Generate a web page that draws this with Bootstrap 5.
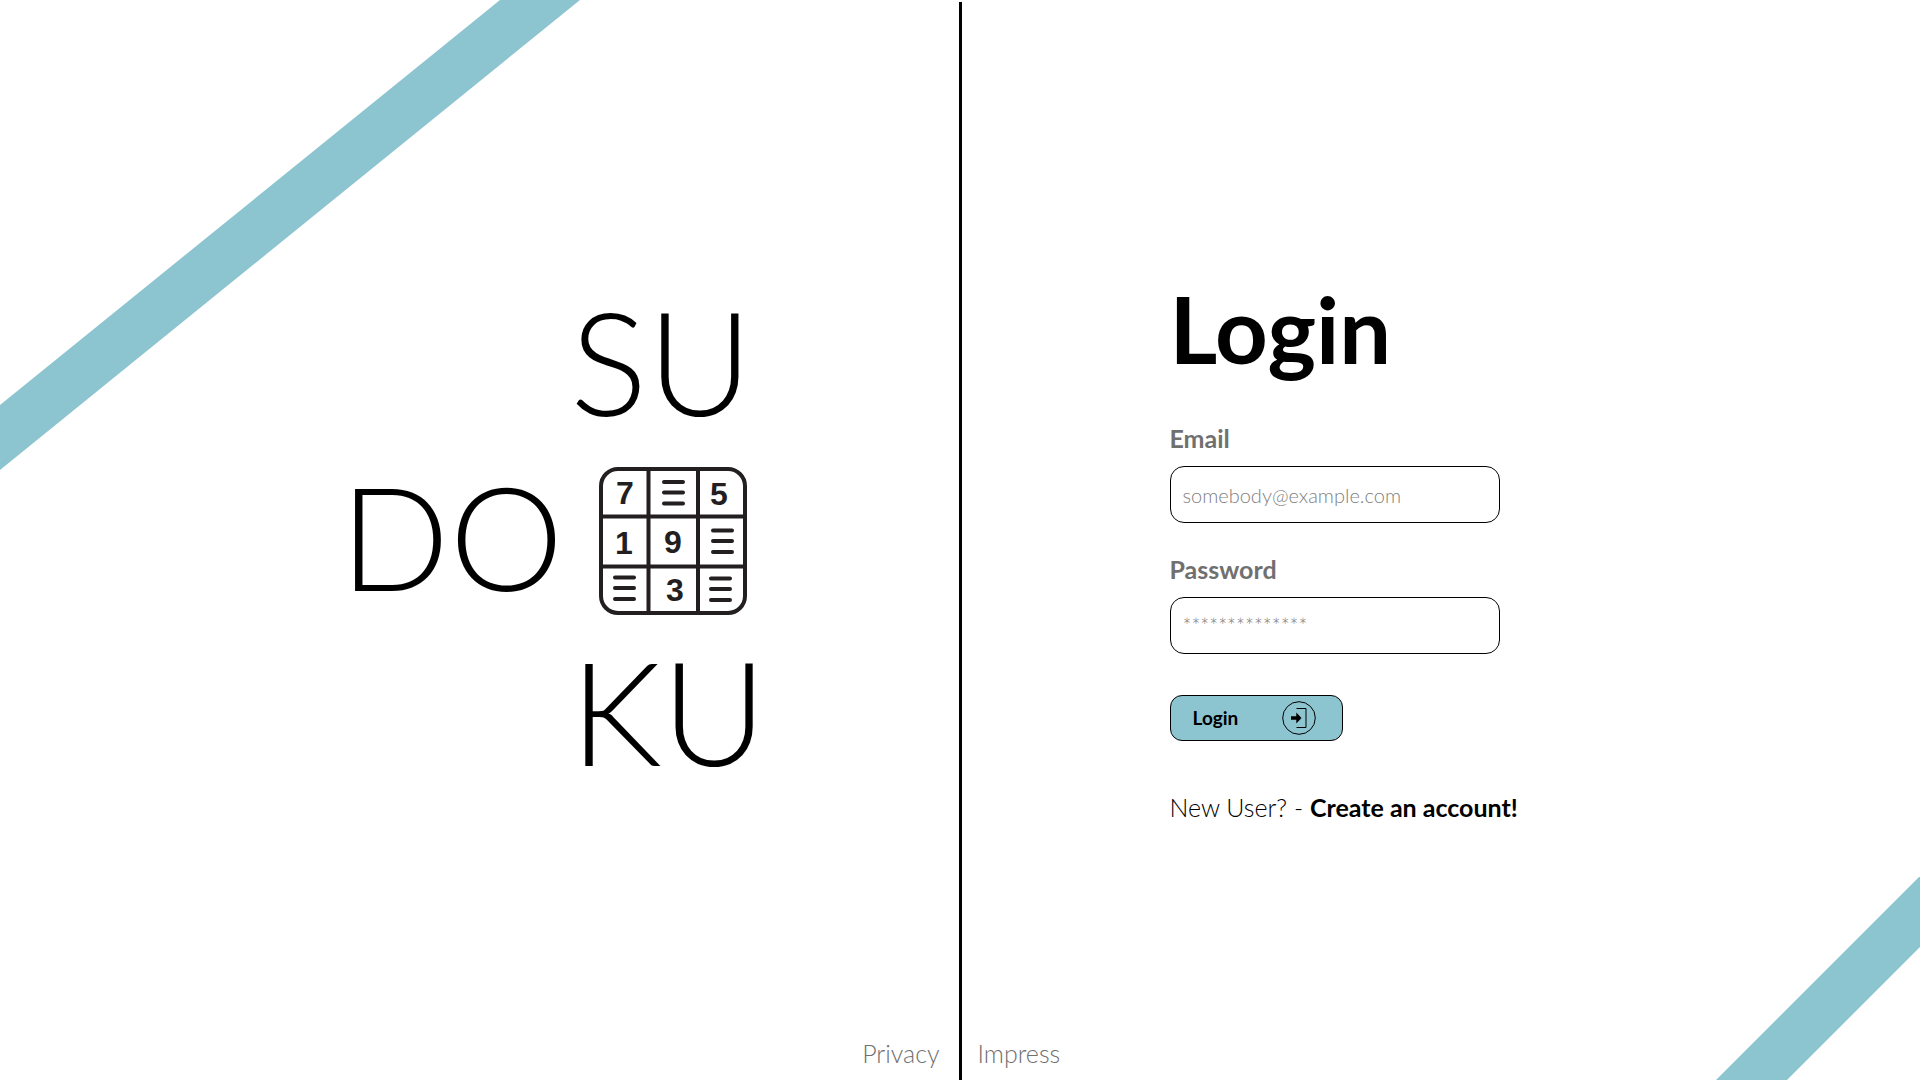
<!DOCTYPE html>
<html lang="en">
<head>
<meta charset="utf-8">
<meta name="viewport" content="width=device-width, initial-scale=1">
<title>Sudoku – Login</title>
<link href="https://cdn.jsdelivr.net/npm/bootstrap@5.3.0/dist/css/bootstrap.min.css" rel="stylesheet">
<style>
  :root { --accent: #8cc4d0; }
  body { font-family: Lato, "Open Sans", sans-serif; font-size: 25px; line-height: 29px; font-weight: 300; color: #000; background: #fff; }
  .divider { width: 3px; margin-top: 2px; background: #000; }
  .half { flex: 1 1 0; min-width: 0; }
  .ribbon { position: absolute; fill: var(--accent); pointer-events: none; }
  .ribbon-start { top: 0; left: 0; }
  .ribbon-end { right: 0; bottom: 0; }
  .brand { display: grid; grid-template-columns: auto auto; column-gap: 7px; margin: 0 192px 10px auto; font-size: 144px; line-height: 175px; font-weight: 300; }
  .brand-top, .brand-bottom { grid-column: 2; }
  .brand-grid { margin: 12px 0 0 29px; }
  .brand-digit { font: bold 32px "Liberation Sans", sans-serif; text-anchor: middle; fill: #231f20; }
  .login-form { width: 360px; margin: 18px 0 0 208px; }
  .login-title { font-size: 92px; line-height: 106px; font-weight: 700; margin-bottom: 42px; }
  .field-label { font-weight: 700; color: #707070; margin-bottom: 13px; }
  .field { width: 330px; height: 57px; border: 1px solid #000; border-radius: 14px; padding: 0 12px; font-size: 20px; font-weight: 300; margin-bottom: 32px; }
  .field::placeholder { color: #808080; opacity: 1; }
  .field[type="password"]::placeholder { font-size: 21px; }
  .login-btn { width: 173px; height: 46px; margin-top: 41px; padding: 0 26px 0 22px; font-size: 19px; font-weight: 700; color: #000; background: var(--accent); border: 1px solid #000; border-radius: 12px; }
  .signup { margin: 52px 0 0; white-space: nowrap; }
  .signup a { color: #000; font-weight: 700; }
  .foot-link { color: #707070; padding: 0 16px 12px; }
  .foot-link-start { padding-right: 19px; }
</style>
</head>
<body>
<main class="d-flex min-vh-100 position-relative overflow-hidden">
  <svg class="ribbon ribbon-start" width="580" height="470" aria-hidden="true"><path d="M0 405 500 0H580L0 470Z"/></svg>
  <svg class="ribbon ribbon-end" width="204" height="204" aria-hidden="true"><path d="M0 204 203 1H204V71L71 204Z"/></svg>

  <section class="half d-flex flex-column position-relative">
    <div class="flex-grow-1 d-flex align-items-center">
      <div class="brand">
        <span class="brand-top">SU</span>
        <span>DO</span>
        <svg class="brand-grid align-self-center" width="148" height="148" viewBox="0 0 148 148" role="img" aria-label="Sudoku grid">
          <g fill="none" stroke="#231f20" stroke-width="4">
            <rect x="2" y="2" width="144" height="144" rx="17"/>
            <path d="M49.5 2V146M99 2V146M2 49.5H146M2 99.5H146"/>
            <path stroke-linecap="round" d="M65 15H84M65 25.5H84M65 36.5H84M114 63.500H133M114 74H133M114 85H133M16 110.500H35M16 121H35M16 132H35M112 111.500H131M112 122H131M112 133H131"/>
          </g>
          <g class="brand-digit">
            <text x="26" y="37">7</text><text x="120" y="38">5</text>
            <text x="25" y="87">1</text><text x="74" y="86">9</text>
            <text x="76" y="134">3</text>
          </g>
        </svg>
        <span class="brand-bottom">KU</span>
      </div>
    </div>
    <a class="foot-link foot-link-start position-absolute bottom-0 end-0 text-decoration-none" href="#privacy">Privacy</a>
  </section>

  <div class="divider"></div>

  <section class="half d-flex flex-column position-relative">
    <div class="flex-grow-1 d-flex align-items-center">
      <form class="login-form">
        <h1 class="login-title">Login</h1>
        <label class="field-label d-block" for="email">Email</label>
        <input class="field d-block" id="email" type="email" placeholder="somebody@example.com">
        <label class="field-label d-block" for="password">Password</label>
        <input class="field d-block" id="password" type="password" placeholder="**************">
        <button class="login-btn btn d-flex align-items-center justify-content-between" type="submit">
          Login
          <svg width="34" height="34" viewBox="0 0 34 34" fill="none" stroke="#000" aria-hidden="true">
            <circle cx="17" cy="17" r="16.300"/>
            <path d="M14.500 7.500H24V26.500H14.500"/>
            <path d="M9 15.300H14.300V11.500L19.500 17 14.300 22.500V18.700H9Z" fill="#000" stroke="none"/>
          </svg>
        </button>
        <p class="signup">New User? - <a class="text-decoration-none" href="#register">Create an account!</a></p>
      </form>
    </div>
    <a class="foot-link position-absolute bottom-0 start-0 text-decoration-none" href="#impress">Impress</a>
  </section>
</main>
<script src="https://cdn.jsdelivr.net/npm/bootstrap@5.3.0/dist/js/bootstrap.bundle.min.js"></script>
</body>
</html>
